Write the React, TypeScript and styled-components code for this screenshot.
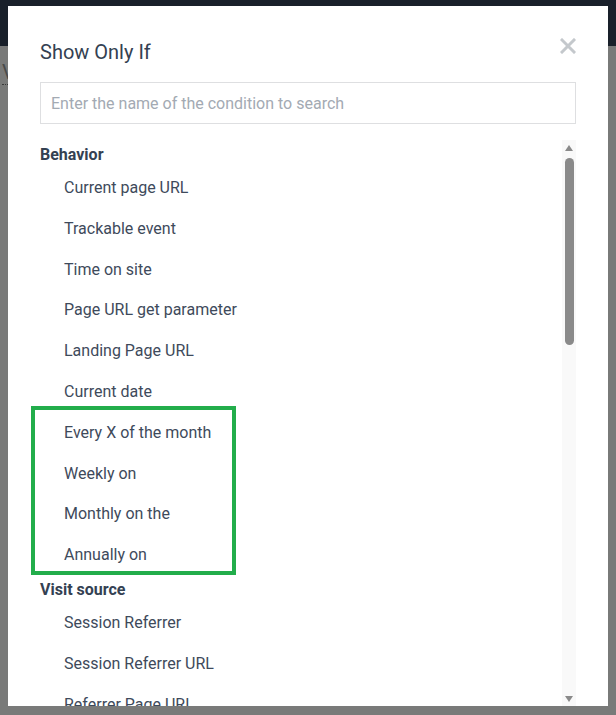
import styled, { createGlobalStyle } from "styled-components";

const GlobalStyle = createGlobalStyle`
  html, body {
    margin: 0;
    padding: 0;
    height: 100%;
    overflow: hidden;
  }
  body {
    font-family: Roboto, "Liberation Sans", sans-serif;
    background: #797a79;
  }
  #root {
    height: 100%;
  }
`;

const Page = styled.div`
  position: relative;
  height: 100%;
  display: flex;
  flex-direction: column;
`;

const TopBar = styled.div`
  height: 46px;
  background: #19202a;
`;

const Behind = styled.div`
  padding: 14px 2px;
  font-size: 20px;
  color: #4a4b4a;
`;

const BehindLabel = styled.span`
  border-bottom: 1px dotted #3a3a3a;
`;

const Modal = styled.div`
  position: absolute;
  top: 6px;
  left: 8px;
  width: 600px;
  height: 700px;
  background: #fff;
  box-sizing: border-box;
  padding: 34px 32px 0 32px;
  display: flex;
  flex-direction: column;
  overflow: hidden;
`;

const Header = styled.div`
  display: flex;
  justify-content: space-between;
  align-items: flex-start;
`;

const Title = styled.h2`
  margin: 0;
  font-size: 20px;
  line-height: 24px;
  font-weight: 400;
  color: #344152;
`;

const CloseButton = styled.button`
  border: none;
  background: none;
  padding: 0;
  margin-top: -2px;
  width: 16px;
  height: 16px;
  cursor: pointer;
  display: flex;
`;

const Search = styled.input`
  margin-top: 18px;
  height: 42px;
  box-sizing: border-box;
  border: 1px solid #dedfe1;
  padding: 0 10px;
  font-family: Roboto, "Liberation Sans", sans-serif;
  font-size: 16px;
  color: #3e4a5b;
  outline: none;

  &::placeholder {
    color: #a3aab3;
  }
`;

const Body = styled.div`
  margin-top: 16px;
  flex: 1;
  min-height: 0;
  display: flex;
`;

const List = styled.div`
  flex: 1;
  padding-top: 1px;
`;

const Group = styled.div`
  font-size: 16px;
  font-weight: 700;
  line-height: 27px;
  color: #344152;
`;

const Item = styled.div`
  padding-left: 24px;
  font-size: 16px;
  line-height: 40.8px;
  color: #3e4a5b;
`;

const Highlight = styled.div`
  position: relative;

  &::after {
    content: "";
    position: absolute;
    left: -9px;
    top: -7px;
    width: 205px;
    bottom: 1px;
    border: 4px solid #22ad4b;
    box-sizing: border-box;
    pointer-events: none;
  }
`;

const Track = styled.div`
  width: 14px;
  background: #f9f9f9;
  display: flex;
  flex-direction: column;
  align-items: center;
  position: relative;
`;

const Arrow = styled.div<{ $down?: boolean }>`
  width: 0;
  height: 0;
  border-left: 4px solid transparent;
  border-right: 4px solid transparent;
  ${(p) =>
    p.$down
      ? "border-top: 6px solid #8a8a8a; position: absolute; top: 556px;"
      : "border-bottom: 6px solid #8a8a8a; margin-top: 5px;"}
`;

const Thumb = styled.div`
  margin-top: 7px;
  width: 9px;
  height: 187px;
  border-radius: 5px;
  background: #8a8a8a;
`;

const behavior = [
  "Current page URL",
  "Trackable event",
  "Time on site",
  "Page URL get parameter",
  "Landing Page URL",
  "Current date",
];

const recurring = ["Every X of the month", "Weekly on", "Monthly on the", "Annually on"];

const visitSource = ["Session Referrer", "Session Referrer URL", "Referrer Page URL"];

export default function App() {
  return (
    <>
      <GlobalStyle />
      <Page>
        <TopBar />
        <Behind>
          <BehindLabel>Visitors</BehindLabel>
        </Behind>
        <Modal>
          <Header>
            <Title>Show Only If</Title>
            <CloseButton aria-label="Close">
              <svg width="16" height="16" viewBox="0 0 16 16">
                <path
                  d="M2 2 L14 14 M14 2 L2 14"
                  stroke="#c4c8cc"
                  strokeWidth="3"
                  strokeLinecap="square"
                />
              </svg>
            </CloseButton>
          </Header>
          <Search placeholder="Enter the name of the condition to search" />
          <Body>
            <List>
              <Group>Behavior</Group>
              {behavior.map((b) => (
                <Item key={b}>{b}</Item>
              ))}
              <Highlight>
                {recurring.map((r) => (
                  <Item key={r}>{r}</Item>
                ))}
              </Highlight>
              <Group>Visit source</Group>
              {visitSource.map((v) => (
                <Item key={v}>{v}</Item>
              ))}
            </List>
            <Track>
              <Arrow />
              <Thumb />
              <Arrow $down />
            </Track>
          </Body>
        </Modal>
      </Page>
    </>
  );
}
